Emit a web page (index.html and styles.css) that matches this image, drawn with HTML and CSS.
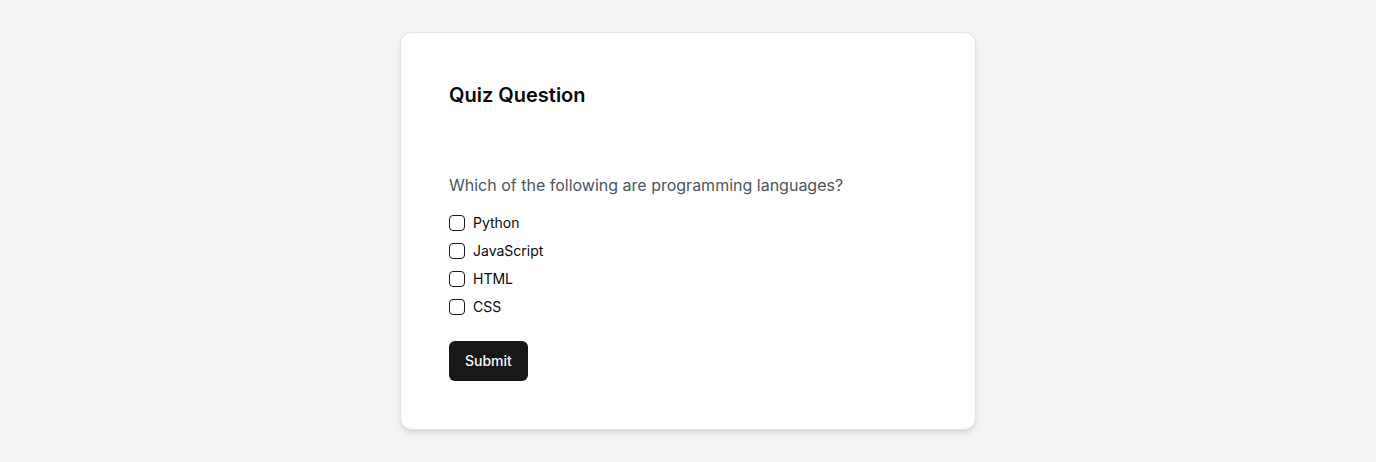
FILE: index.html
```
<!DOCTYPE html>
<html lang="en">
<head>
<meta charset="utf-8">
<meta name="viewport" content="width=device-width, initial-scale=1">
<title>Quiz Question</title>
<link rel="stylesheet" href="styles.css">
</head>
<body>
<main class="page">
  <form class="card">
    <h1 class="card-title">Quiz Question</h1>
    <fieldset class="question">
      <legend class="question-text">Which of the following are programming languages?</legend>
      <div class="options">
        <div class="option"><input class="checkbox" type="checkbox" id="python"><label class="option-label" for="python">Python</label></div>
        <div class="option"><input class="checkbox" type="checkbox" id="javascript"><label class="option-label" for="javascript">JavaScript</label></div>
        <div class="option"><input class="checkbox" type="checkbox" id="html"><label class="option-label" for="html">HTML</label></div>
        <div class="option"><input class="checkbox" type="checkbox" id="css"><label class="option-label" for="css">CSS</label></div>
      </div>
    </fieldset>
    <button class="submit" type="submit">Submit</button>
  </form>
</main>
</body>
</html>
```
FILE: styles.css
```
* {
  box-sizing: border-box;
}

body {
  margin: 0;
  font-family: Inter, sans-serif;
  color: #09090b;
  background: #f3f4f6;
}

.page {
  display: flex;
  align-items: center;
  justify-content: center;
  min-height: 100vh;
  padding: 32px;
}

.card {
  width: 100%;
  max-width: 576px;
  padding: 48px;
  background: #fff;
  border: 1px solid #e4e4e7;
  border-radius: 12px;
  box-shadow: 0 4px 6px -1px rgb(0 0 0 / 0.1), 0 2px 4px -2px rgb(0 0 0 / 0.1);
}

.card-title {
  margin: 0 0 64px;
  font-size: 20px;
  font-weight: 600;
  line-height: 28px;
}

.question {
  min-width: 0;
  margin: 0;
  padding: 0;
  border: 0;
}

.question-text {
  margin-bottom: 16px;
  padding: 0;
  font-size: 16px;
  line-height: 24px;
  color: #4b5563;
}

.options {
  display: grid;
  gap: 8px;
}

.option {
  display: flex;
  align-items: center;
  gap: 8px;
}

.checkbox {
  appearance: none;
  flex-shrink: 0;
  width: 16px;
  height: 16px;
  margin: 0;
  border: 1px solid #18181b;
  border-radius: 4px;
}

.checkbox:checked {
  background: #18181b;
  box-shadow: inset 0 0 0 3px #fff;
}

.option-label {
  font-size: 14px;
  line-height: 20px;
}

.submit {
  height: 40px;
  margin-top: 24px;
  padding: 8px 16px;
  border: 0;
  border-radius: 6px;
  background: #18181b;
  color: #fafafa;
  font-family: inherit;
  font-size: 14px;
  font-weight: 500;
  line-height: 20px;
}
```
